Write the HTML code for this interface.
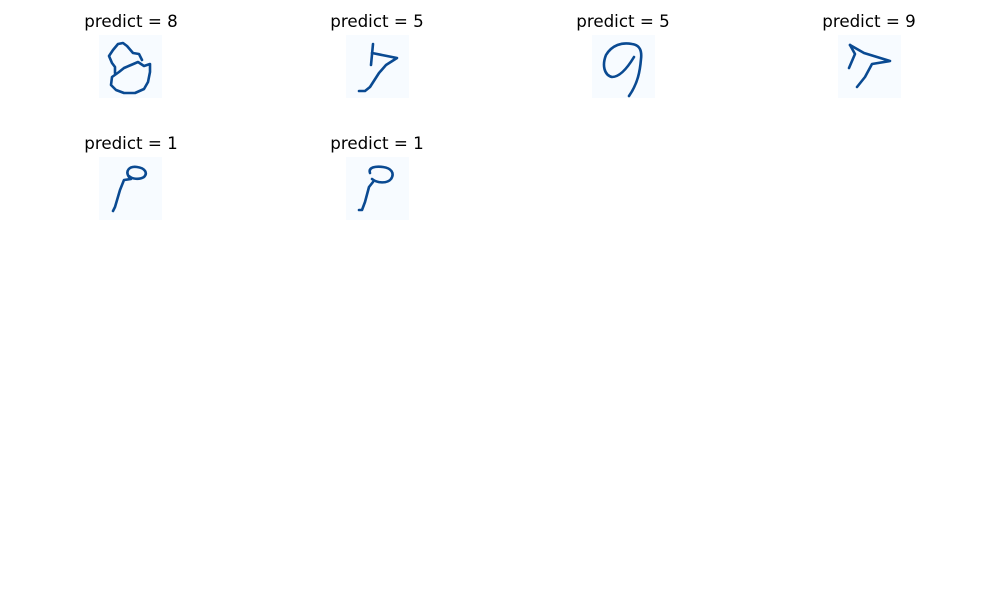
<!DOCTYPE html>
<html><head><meta charset="utf-8"><style>
html,body{margin:0;padding:0;background:#fff;width:1000px;height:600px;overflow:hidden}
.t{position:absolute;font-family:"DejaVu Sans","Liberation Sans",sans-serif;font-size:16.7px;color:#000;width:200px;text-align:center;line-height:16px}
svg{position:absolute}
path,ellipse{fill:none;stroke:#0a4a92;stroke-width:2.6;stroke-linecap:round;stroke-linejoin:round}
</style></head><body>
<div class="t" style="left:31px;top:13px">predict = 8</div>
<div class="t" style="left:277px;top:13px">predict = 5</div>
<div class="t" style="left:523px;top:13px">predict = 5</div>
<div class="t" style="left:769px;top:13px">predict = 9</div>
<div class="t" style="left:31px;top:135px">predict = 1</div>
<div class="t" style="left:277px;top:135px">predict = 1</div>

<svg style="left:99px;top:35px" width="63" height="63" viewBox="0 0 63 63"><rect width="63" height="63" fill="#f7fbff"/>
<path d="M43,25 L40,19 L34,18 L28,11 L24,8 L19,9 L14,15 L10,21 L13,28 L16,32 L16,38"/>
<path d="M20,37 L13,42 L12,50 L17,55 L25,58 L36,58 L45,54 L49,47 L51,37 L51,29 L45,31 L39,27 L32,30 L25,33 L20,37"/></svg>

<svg style="left:346px;top:35px" width="63" height="63" viewBox="0 0 63 63"><rect width="63" height="63" fill="#f7fbff"/>
<path d="M27,9 L25,30"/><path d="M26,18 L51,23 L40,30 L33,38 L24,52 L19,56 L13,56"/></svg>

<svg style="left:592px;top:35px" width="63" height="63" viewBox="0 0 63 63"><rect width="63" height="63" fill="#f7fbff"/>
<path d="M42,22 C36,32 28,42 20,42 C12,40 10,30 14,20 C20,10 30,7 40,9 C48,10 50,16 49,24 C48,36 46,48 37,61"/></svg>

<svg style="left:838px;top:35px" width="63" height="63" viewBox="0 0 63 63"><rect width="63" height="63" fill="#f7fbff"/>
<path d="M12,10 L26,18 L52,26 L34,29 L27,42 L19,52"/><path d="M12,10 L17,19 L11,33"/></svg>

<svg style="left:99px;top:157px" width="63" height="63" viewBox="0 0 63 63"><rect width="63" height="63" fill="#f7fbff"/>
<path d="M30,20 C26,14 30,9 38,10 C46,11 49,16 45,20 C40,23 33,22 30,19"/><path d="M32,22 L25,23 L21,33 L16,50 L14,54"/></svg>

<svg style="left:346px;top:157px" width="63" height="63" viewBox="0 0 63 63"><rect width="63" height="63" fill="#f7fbff"/>
<path d="M24,16 C22,10 30,9 37,10 C45,11 49,16 45,22 C41,27 31,26 26,22"/><path d="M27,25 L23,30 L19,45 L16,53 L13,53"/></svg>
</body></html>
